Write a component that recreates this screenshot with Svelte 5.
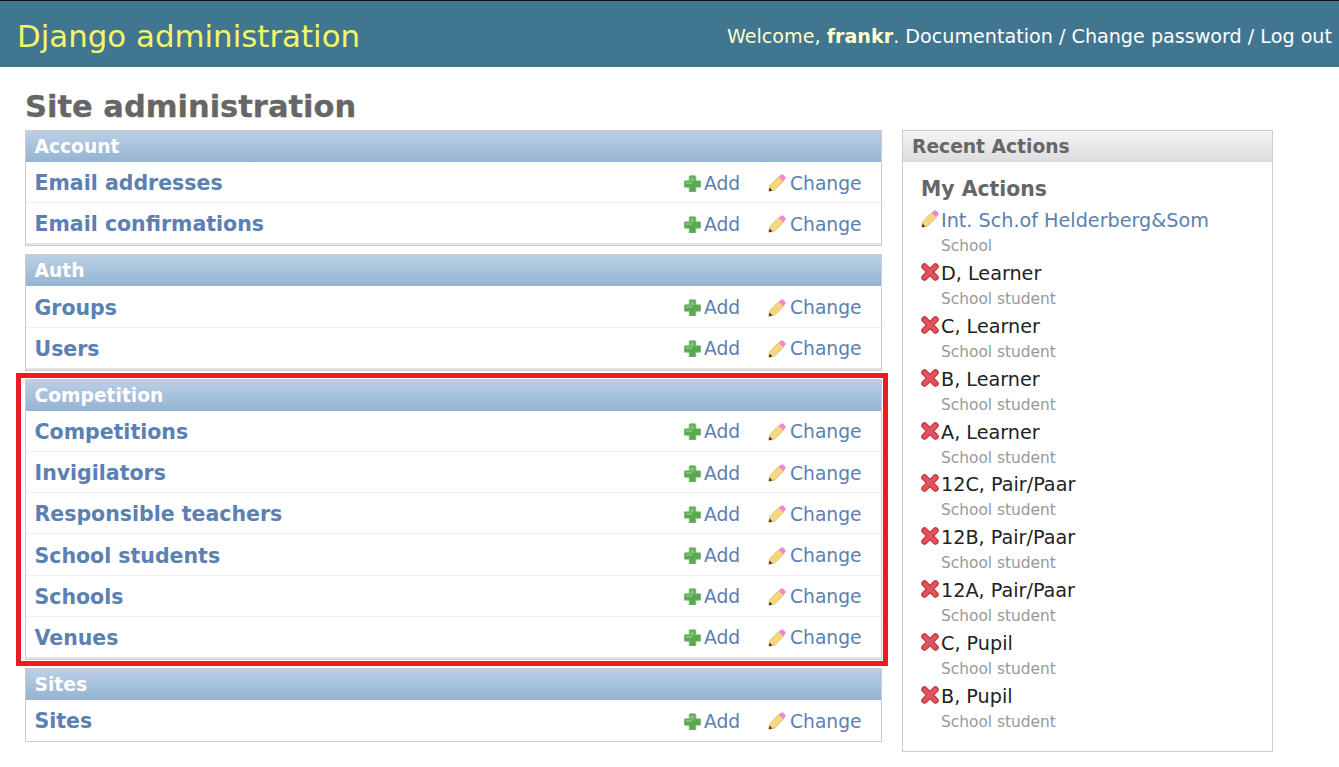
<script>
  const modules = [
    { name: 'Account', models: ['Email addresses', 'Email confirmations'] },
    { name: 'Auth', models: ['Groups', 'Users'] },
    { name: 'Competition', highlight: true, models: ['Competitions', 'Invigilators', 'Responsible teachers', 'School students', 'Schools', 'Venues'] },
    { name: 'Sites', models: ['Sites'] }
  ];

  const actions = [
    { title: 'Int. Sch.of Helderberg&Som', type: 'School', kind: 'change' },
    { title: 'D, Learner', type: 'School student', kind: 'delete' },
    { title: 'C, Learner', type: 'School student', kind: 'delete' },
    { title: 'B, Learner', type: 'School student', kind: 'delete' },
    { title: 'A, Learner', type: 'School student', kind: 'delete' },
    { title: '12C, Pair/Paar', type: 'School student', kind: 'delete' },
    { title: '12B, Pair/Paar', type: 'School student', kind: 'delete' },
    { title: '12A, Pair/Paar', type: 'School student', kind: 'delete' },
    { title: 'C, Pupil', type: 'School student', kind: 'delete' },
    { title: 'B, Pupil', type: 'School student', kind: 'delete' }
  ];
</script>

{#snippet plus()}
  <svg class="icon" width="17" height="17" viewBox="0 0 17 17">
    <path d="M6 .8h5q.8 0 .8.8v4.200H16q.8 0 .8.8v4.800q0 .8-.8.8h-4.200v4.200q0 .8-.8.8H6q-.8 0-.8-.8v-4.200H1q-.8 0-.8-.8V6.600q0-.8.8-.8h4.200V1.600q0-.8.8-.8z" fill="#5aa852" stroke="#7fbf78" stroke-width=".8" />
    <path d="M6.500 2.500h3.500v4H6.500zM2 7h6v2H2z" fill="#7cc474" />
  </svg>
{/snippet}

{#snippet pencil()}
  <svg class="icon" width="18" height="18" viewBox="0 0 18 18">
    <path d="M.8 17.200l1.100-5.800L10.600 2.600l4.800 4.800-8.800 8.800z" fill="#f3d97c" stroke="#d8bd78" stroke-width=".8" />
    <path d="M.8 17.200l.8-3.600 2.800 2.800z" fill="#4a3420" />
    <path d="M10.800 2.800l1.900-1.800a2 2 0 0 1 2.800 0l1.500 1.500a2 2 0 0 1 0 2.800l-1.800 1.900z" fill="#ee86d2" />
  </svg>
{/snippet}

{#snippet cross()}
  <svg class="icon" width="18" height="18" viewBox="0 0 18 18">
    <path d="M3.500 3.500l11 11M14.500 3.500l-11 11" stroke="#c93a44" stroke-width="6.500" stroke-linecap="round" fill="none" />
    <path d="M3.700 3.700l10.600 10.600M14.300 3.700L3.700 14.300" stroke="#e0545c" stroke-width="4" stroke-linecap="round" fill="none" />
  </svg>
{/snippet}

<header>
  <div class="brand">Django administration</div>
  <div class="tools">Welcome, <strong>frankr</strong>. <span>Documentation / Change password / Log out</span></div>
</header>

<main>
  <h1>Site administration</h1>
  <div class="columns">
    <div class="apps">
      {#each modules as mod}
        <section class="module" class:highlight={mod.highlight}>
          <div class="caption">{mod.name}</div>
          {#each mod.models as model}
            <div class="row">
              <a class="model" href="#top">{model}</a>
              <a class="action add" href="#top">{@render plus()}Add</a>
              <a class="action change" href="#top">{@render pencil()}Change</a>
            </div>
          {/each}
        </section>
      {/each}
    </div>

    <aside>
      <div class="caption grey">Recent Actions</div>
      <h3>My Actions</h3>
      <ul>
        {#each actions as item}
          <li>
            <div class="title" class:link={item.kind === 'change'}>
              {#if item.kind === 'change'}{@render pencil()}{:else}{@render cross()}{/if}{item.title}
            </div>
            <div class="type">{item.type}</div>
          </li>
        {/each}
      </ul>
    </aside>
  </div>
</main>

<style>
  :global(body) {
    margin: 0;
    background: #fff;
    font-family: "DejaVu Sans", Verdana, sans-serif;
  }
  header {
    height: 67px;
    box-sizing: border-box;
    border-top: 1px solid #111;
    background: #417690;
    display: flex;
    justify-content: space-between;
    align-items: center;
    padding: 3px 7px 0 17px;
  }
  .brand {
    color: #f5f569;
    font-size: 30.850px;
    white-space: nowrap;
  }
  .tools {
    color: #ffc;
    font-size: 19.150px;
    white-space: nowrap;
    padding-top: 2px;
  }
  .tools strong {
    color: #ffc;
  }
  .tools span {
    color: #fff;
  }
  main {
    padding: 0 25px;
  }
  h1 {
    margin: 0;
    height: 63px;
    line-height: 79px;
    font-size: 30.500px;
    font-weight: bold;
    color: #666;
    -webkit-text-stroke: 0.3px #666;
  }
  .columns {
    display: flex;
    align-items: flex-start;
    gap: 20px;
  }
  .apps {
    width: 857px;
    display: flex;
    flex-direction: column;
    gap: 8px;
  }
  .module {
    position: relative;
    border: 1px solid #ccc;
    background: #fff;
  }
  .module.highlight::after {
    content: "";
    position: absolute;
    inset: -7px -7px -7px -10px;
    border: 5px solid #ed1c24;
    pointer-events: none;
  }
  .caption {
    height: 31px;
    line-height: 32px;
    padding-left: 8.500px;
    font-size: 18.700px;
    font-weight: bold;
    color: #fff;
    background: linear-gradient(#bcd0e6, #94b3d2);
  }
  .caption.grey {
    padding-left: 9px;
    color: #666;
    background: linear-gradient(#f4f4f4, #dcdcdc);
  }
  .row {
    height: 38px;
    padding: 2.200px 0 0 8.500px;
    border-bottom: 1px solid #eee;
    display: flex;
    align-items: center;
    font-size: 18.700px;
  }
  .row:last-child {
    border-bottom: 2px solid #e4e4e4;
  }
  .module:last-child .row:last-child {
    border-bottom: 1px solid #fff;
  }
  a {
    color: #5b80b2;
    text-decoration: none;
    white-space: nowrap;
  }
  .model {
    flex: 1;
    font-size: 20.500px;
    font-weight: bold;
  }
  .action {
    display: flex;
    align-items: center;
  }
  .add {
    width: 84px;
  }
  .change {
    width: 113px;
  }
  .icon {
    flex: none;
    margin-right: 3px;
  }
  .change .icon {
    margin-right: 4px;
  }
  aside {
    width: 369px;
    height: 620px;
    border: 1px solid #ccc;
  }
  h3 {
    margin: 14px 0 0 18px;
    font-size: 20.400px;
    line-height: 27px;
    font-weight: bold;
    color: #666;
  }
  ul {
    list-style: none;
    margin: 4px 0 0;
    padding: 0 0 0 18px;
  }
  li {
    height: 52.900px;
  }
  .title {
    font-size: 19.200px;
    line-height: 28px;
    color: #222;
    white-space: nowrap;
  }
  .title.link {
    color: #5b80b2;
  }
  .title .icon {
    margin-right: 2px;
    vertical-align: -1px;
  }
  .type {
    margin: 1px 0 0 20px;
    font-size: 15.400px;
    line-height: 21px;
    color: #999;
  }
</style>
